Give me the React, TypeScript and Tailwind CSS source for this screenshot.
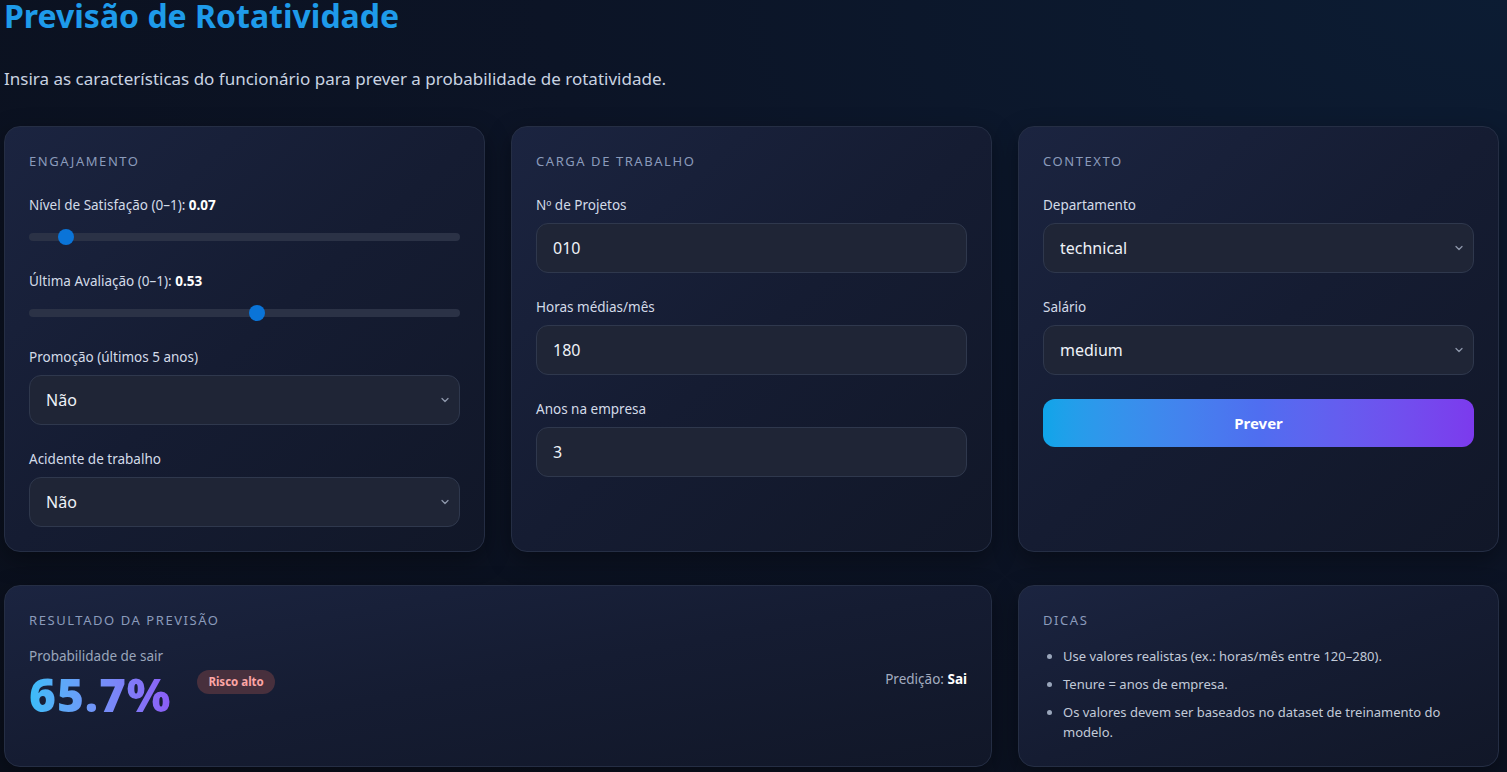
import { ChevronDown } from "lucide-react";

const font = { fontFamily: "'Noto Sans', 'Open Sans', sans-serif" };

function Card({ title, className = "", children }: { title: string; className?: string; children?: React.ReactNode }) {
  return (
    <section
      className={`rounded-2xl border border-[#252e44] bg-gradient-to-br from-[#1b2440] via-[#151c32] to-[#111728] p-6 shadow-[0_8px_24px_rgba(0,0,0,0.35)] ${className}`}
    >
      <h2 className="text-[13px] leading-5 uppercase tracking-[0.12em] text-[#8b9bbb]">{title}</h2>
      {children}
    </section>
  );
}

function Label({ children }: { children: React.ReactNode }) {
  return <label className="block text-[13.5px] leading-5 text-[#d3dbe8]">{children}</label>;
}

function Slider({ label, value }: { label: string; value: number }) {
  return (
    <div>
      <Label>
        {label}: <b className="font-bold text-white">{value.toFixed(2)}</b>
      </Label>
      <div className="relative mt-3 h-5">
        <div className="absolute left-0 right-0 top-[6px] h-2 rounded-full bg-[#2b3246]" />
        <div
          className="absolute top-[2px] h-4 w-4 rounded-full bg-[#0a74d8]"
          style={{ left: `calc(${value} * (100% - 16px))` }}
        />
      </div>
    </div>
  );
}

function SelectField({ label, value, options }: { label: string; value: string; options: string[] }) {
  return (
    <div>
      <Label>{label}</Label>
      <div className="relative mt-2">
        <select
          defaultValue={value}
          className="h-[50px] w-full appearance-none rounded-xl border border-[#2f384d] bg-[#1f2536] pl-4 pr-10 text-[16px] text-[#eef2f8] outline-none"
          style={font}
        >
          {options.map((o) => (
            <option key={o}>{o}</option>
          ))}
        </select>
        <ChevronDown
          size={12}
          strokeWidth={2.5}
          className="pointer-events-none absolute right-[9px] top-[19px] text-[#8e98ab]"
        />
      </div>
    </div>
  );
}

function InputField({ label, value }: { label: string; value: string }) {
  return (
    <div>
      <Label>{label}</Label>
      <input
        defaultValue={value}
        className="mt-2 h-[50px] w-full rounded-xl border border-[#2f384d] bg-[#1f2536] px-4 text-[16px] text-[#eef2f8] outline-none"
        style={font}
      />
    </div>
  );
}

export default function App() {
  return (
    <div
      className="min-h-screen bg-[#0b111f] bg-[radial-gradient(ellipse_at_top_right,#0c1c33_0%,#0c1426_45%,#0a0f1b_100%)] pl-1 pr-2 pb-6"
      style={font}
    >
      <h1 className="-mt-[4px] text-[32px] font-bold leading-10 text-[#1e9bea]">Previsão de Rotatividade</h1>
      <p className="mt-[31px] text-[17px] leading-6 text-[#c9d3e2]">
        Insira as características do funcionário para prever a probabilidade de rotatividade.
      </p>

      <div className="mt-[35px] grid grid-cols-3 gap-x-[26px] gap-y-[33px]">
        <Card title="Engajamento">
          <div className="mt-6 flex flex-col gap-6">
            <Slider label="Nível de Satisfação (0–1)" value={0.07} />
            <Slider label="Última Avaliação (0–1)" value={0.53} />
            <SelectField label="Promoção (últimos 5 anos)" value="Não" options={["Não", "Sim"]} />
            <SelectField label="Acidente de trabalho" value="Não" options={["Não", "Sim"]} />
          </div>
        </Card>

        <Card title="Carga de trabalho">
          <div className="mt-6 flex flex-col gap-6">
            <InputField label="Nº de Projetos" value="010" />
            <InputField label="Horas médias/mês" value="180" />
            <InputField label="Anos na empresa" value="3" />
          </div>
        </Card>

        <Card title="Contexto">
          <div className="mt-6 flex flex-col gap-6">
            <SelectField
              label="Departamento"
              value="technical"
              options={["sales", "technical", "support", "IT", "hr", "management"]}
            />
            <SelectField label="Salário" value="medium" options={["low", "medium", "high"]} />
            <button className="h-12 w-full rounded-xl bg-gradient-to-r from-[#0ea5e9] via-[#4f6ef0] to-[#7c3aed] text-[15px] font-bold text-white">
              Prever
            </button>
          </div>
        </Card>

        <Card title="Resultado da previsão" className="col-span-2">
          <div className="mt-[16px] flex items-start justify-between">
            <div>
              <div className="text-[13.5px] leading-5 text-[#9aa6bb]">Probabilidade de sair</div>
              <div className="flex items-start gap-[26px]">
                <span className="mt-[8px] bg-gradient-to-r from-[#38bdf8] to-[#8b5cf6] bg-clip-text text-[46px] font-black leading-[40px] tracking-[0.02em] text-transparent">
                  65.7%
                </span>
                <span className="mt-[4px] rounded-full bg-[#48303d] px-[11px] py-[3px] text-[11.5px] font-bold leading-[18px] text-[#fca5a5]">
                  Risco alto
                </span>
              </div>
            </div>
            <div className="mt-[23px] text-[13.5px] text-[#a3adc0]">
              Predição: <b className="font-bold text-white">Sai</b>
            </div>
          </div>
        </Card>

        <Card title="Dicas">
          <ul className="mt-[16px] flex list-disc flex-col gap-2 pl-5 text-[13px] leading-5 text-[#c2cad8] marker:text-[#9aa6bb]">
            <li>Use valores realistas (ex.: horas/mês entre 120–280).</li>
            <li>Tenure = anos de empresa.</li>
            <li>Os valores devem ser baseados no dataset de treinamento do modelo.</li>
          </ul>
        </Card>
      </div>
    </div>
  );
}
